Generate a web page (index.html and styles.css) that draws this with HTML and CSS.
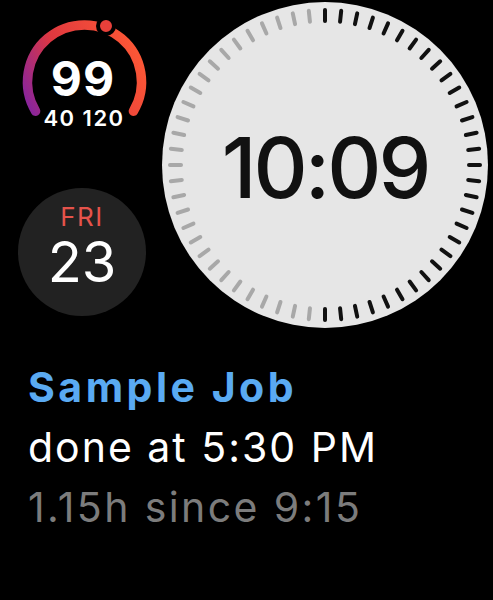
FILE: index.html
```
<!DOCTYPE html>
<html lang="en">
<head>
  <meta charset="UTF-8" />
  <meta name="viewport" content="width=device-width, initial-scale=1.0"/>
  <title>Job Timer | Watch Face</title>
  <link rel="stylesheet" href="styles.css">
</head>
<body>
  <div class="watch">
    <div class="top">
      <div class="side">
        <!-- Heart rate gauge -->
        <svg class="gauge" width="162" height="140" viewBox="0 0 162 140">
          <defs>
            <linearGradient id="gaugeGrad" gradientUnits="userSpaceOnUse" x1="25" y1="115" x2="140" y2="60">
              <stop offset="0" stop-color="#7e22a8"/>
              <stop offset="0.45" stop-color="#e0383f"/>
              <stop offset="1" stop-color="#fb5636"/>
            </linearGradient>
          </defs>
          <path d="M 35.6 111.2 A 57 57 0 1 1 133.4 111.2" fill="none" stroke="url(#gaugeGrad)" stroke-width="9.5" stroke-linecap="round"/>
          <circle cx="106" cy="26" r="8" fill="#e8403a" stroke="#000" stroke-width="4"/>
          <text class="gauge-value" x="83" y="96" text-anchor="middle">99</text>
          <text class="gauge-range" x="84" y="126" text-anchor="middle">40 120</text>
        </svg>

        <div class="date">
          <span class="day">FRI</span>
          <span class="num">23</span>
        </div>
      </div>

      <!-- Main clock -->
      <svg class="clock" width="326" height="326" viewBox="0 0 326 326">
        <defs>
          <line id="tick" x1="163" y1="8" x2="163" y2="19" stroke-width="4" stroke-linecap="round"/>
        </defs>
        <circle cx="163" cy="163" r="163" fill="#e6e6e6"/>
        <g class="ticks-dark">
          <use href="#tick"/>
          <use href="#tick" transform="rotate(6 163 163)"/>
          <use href="#tick" transform="rotate(12 163 163)"/>
          <use href="#tick" transform="rotate(18 163 163)"/>
          <use href="#tick" transform="rotate(24 163 163)"/>
          <use href="#tick" transform="rotate(30 163 163)"/>
          <use href="#tick" transform="rotate(36 163 163)"/>
          <use href="#tick" transform="rotate(42 163 163)"/>
          <use href="#tick" transform="rotate(48 163 163)"/>
          <use href="#tick" transform="rotate(54 163 163)"/>
          <use href="#tick" transform="rotate(60 163 163)"/>
          <use href="#tick" transform="rotate(66 163 163)"/>
          <use href="#tick" transform="rotate(72 163 163)"/>
          <use href="#tick" transform="rotate(78 163 163)"/>
          <use href="#tick" transform="rotate(84 163 163)"/>
          <use href="#tick" transform="rotate(90 163 163)"/>
          <use href="#tick" transform="rotate(96 163 163)"/>
          <use href="#tick" transform="rotate(102 163 163)"/>
          <use href="#tick" transform="rotate(108 163 163)"/>
          <use href="#tick" transform="rotate(114 163 163)"/>
          <use href="#tick" transform="rotate(120 163 163)"/>
          <use href="#tick" transform="rotate(126 163 163)"/>
          <use href="#tick" transform="rotate(132 163 163)"/>
          <use href="#tick" transform="rotate(138 163 163)"/>
          <use href="#tick" transform="rotate(144 163 163)"/>
          <use href="#tick" transform="rotate(150 163 163)"/>
          <use href="#tick" transform="rotate(156 163 163)"/>
          <use href="#tick" transform="rotate(162 163 163)"/>
          <use href="#tick" transform="rotate(168 163 163)"/>
          <use href="#tick" transform="rotate(174 163 163)"/>
          <use href="#tick" transform="rotate(180 163 163)"/>
        </g>
        <g class="ticks-light">
          <use href="#tick" transform="rotate(186 163 163)"/>
          <use href="#tick" transform="rotate(192 163 163)"/>
          <use href="#tick" transform="rotate(198 163 163)"/>
          <use href="#tick" transform="rotate(204 163 163)"/>
          <use href="#tick" transform="rotate(210 163 163)"/>
          <use href="#tick" transform="rotate(216 163 163)"/>
          <use href="#tick" transform="rotate(222 163 163)"/>
          <use href="#tick" transform="rotate(228 163 163)"/>
          <use href="#tick" transform="rotate(234 163 163)"/>
          <use href="#tick" transform="rotate(240 163 163)"/>
          <use href="#tick" transform="rotate(246 163 163)"/>
          <use href="#tick" transform="rotate(252 163 163)"/>
          <use href="#tick" transform="rotate(258 163 163)"/>
          <use href="#tick" transform="rotate(264 163 163)"/>
          <use href="#tick" transform="rotate(270 163 163)"/>
          <use href="#tick" transform="rotate(276 163 163)"/>
          <use href="#tick" transform="rotate(282 163 163)"/>
          <use href="#tick" transform="rotate(288 163 163)"/>
          <use href="#tick" transform="rotate(294 163 163)"/>
          <use href="#tick" transform="rotate(300 163 163)"/>
          <use href="#tick" transform="rotate(306 163 163)"/>
          <use href="#tick" transform="rotate(312 163 163)"/>
          <use href="#tick" transform="rotate(318 163 163)"/>
          <use href="#tick" transform="rotate(324 163 163)"/>
          <use href="#tick" transform="rotate(330 163 163)"/>
          <use href="#tick" transform="rotate(336 163 163)"/>
          <use href="#tick" transform="rotate(342 163 163)"/>
          <use href="#tick" transform="rotate(348 163 163)"/>
          <use href="#tick" transform="rotate(354 163 163)"/>
        </g>
        <text class="time" x="163" y="196" text-anchor="middle">10:09</text>
      </svg>
    </div>

    <div class="info">
      <div class="job">Sample Job</div>
      <div class="done">done at 5:30 PM</div>
      <div class="since">1.15h since 9:15</div>
    </div>
  </div>
</body>
</html>
```

FILE: styles.css
```
body {
  margin: 0;
  background-color: #000;
  font-family: Inter, "Noto Sans", sans-serif;
  color: #fff;
}
.watch {
  width: 493px;
  height: 600px;
  display: flex;
  flex-direction: column;
}
.top {
  display: flex;
  height: 330px;
}
.side {
  width: 162px;
  display: flex;
  flex-direction: column;
}
.gauge {
  display: block;
}
.gauge-value {
  fill: #fff;
  font-size: 48px;
  font-weight: 700;
  letter-spacing: 1px;
}
.gauge-range {
  fill: #fff;
  font-size: 22px;
  font-weight: 600;
  letter-spacing: 1.5px;
}
.date {
  width: 128px;
  height: 128px;
  margin: 48px 0 0 18px;
  box-sizing: border-box;
  padding-top: 17px;
  border-radius: 50%;
  background-color: #222;
  display: flex;
  flex-direction: column;
  align-items: center;
}
.day {
  color: #e5534b;
  font-size: 26px;
  line-height: 24px;
  letter-spacing: 1.5px;
}
.num {
  margin-top: 8px;
  font-size: 56px;
  line-height: 50px;
}
.clock {
  display: block;
  margin-top: 2px;
}
.ticks-dark {
  stroke: #111;
}
.ticks-light {
  stroke: #a8a8a8;
}
.time {
  fill: #111;
  font-size: 84px;
  font-weight: 500;
  letter-spacing: -3px;
}
.info {
  padding: 27px 0 0 28px;
  font-size: 41px;
  line-height: 60px;
  letter-spacing: 2px;
}
.job {
  color: #5aaaf2;
  font-weight: 700;
  letter-spacing: 3.5px;
}
.since {
  color: #7c7c7c;
  letter-spacing: 2.4px;
}
```
